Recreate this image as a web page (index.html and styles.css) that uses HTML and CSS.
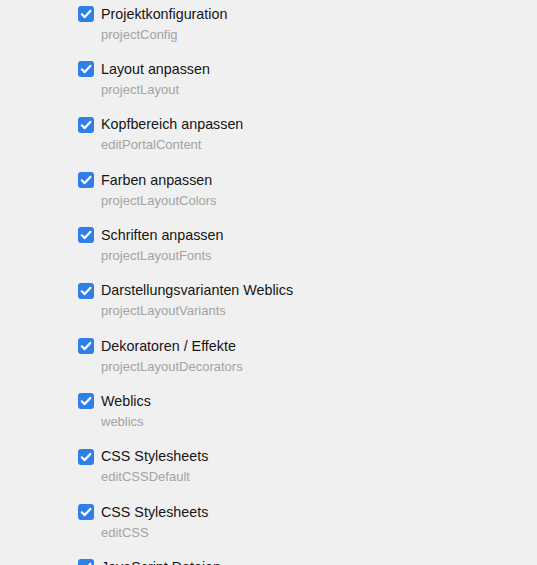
FILE: index.html
```html
<!DOCTYPE html>
<html lang="de">
<head>
<meta charset="utf-8">
<title>Rechte</title>
<link rel="stylesheet" href="styles.css">
</head>
<body>
<ul class="perm-list">
  <li class="perm"><span class="check"><svg viewBox="0 0 16 16"><path d="M3.8 8.3 L6.7 11.1 L12.3 4.9"/></svg></span><div class="text"><div class="label">Projektkonfiguration</div><div class="key">projectConfig</div></div></li>
  <li class="perm"><span class="check"><svg viewBox="0 0 16 16"><path d="M3.8 8.3 L6.7 11.1 L12.3 4.9"/></svg></span><div class="text"><div class="label">Layout anpassen</div><div class="key">projectLayout</div></div></li>
  <li class="perm"><span class="check"><svg viewBox="0 0 16 16"><path d="M3.8 8.3 L6.7 11.1 L12.3 4.9"/></svg></span><div class="text"><div class="label">Kopfbereich anpassen</div><div class="key">editPortalContent</div></div></li>
  <li class="perm"><span class="check"><svg viewBox="0 0 16 16"><path d="M3.8 8.3 L6.7 11.1 L12.3 4.9"/></svg></span><div class="text"><div class="label">Farben anpassen</div><div class="key">projectLayoutColors</div></div></li>
  <li class="perm"><span class="check"><svg viewBox="0 0 16 16"><path d="M3.8 8.3 L6.7 11.1 L12.3 4.9"/></svg></span><div class="text"><div class="label">Schriften anpassen</div><div class="key">projectLayoutFonts</div></div></li>
  <li class="perm"><span class="check"><svg viewBox="0 0 16 16"><path d="M3.8 8.3 L6.7 11.1 L12.3 4.9"/></svg></span><div class="text"><div class="label">Darstellungsvarianten Weblics</div><div class="key">projectLayoutVariants</div></div></li>
  <li class="perm"><span class="check"><svg viewBox="0 0 16 16"><path d="M3.8 8.3 L6.7 11.1 L12.3 4.9"/></svg></span><div class="text"><div class="label">Dekoratoren / Effekte</div><div class="key">projectLayoutDecorators</div></div></li>
  <li class="perm"><span class="check"><svg viewBox="0 0 16 16"><path d="M3.8 8.3 L6.7 11.1 L12.3 4.9"/></svg></span><div class="text"><div class="label">Weblics</div><div class="key">weblics</div></div></li>
  <li class="perm"><span class="check"><svg viewBox="0 0 16 16"><path d="M3.8 8.3 L6.7 11.1 L12.3 4.9"/></svg></span><div class="text"><div class="label">CSS Stylesheets</div><div class="key">editCSSDefault</div></div></li>
  <li class="perm"><span class="check"><svg viewBox="0 0 16 16"><path d="M3.8 8.3 L6.7 11.1 L12.3 4.9"/></svg></span><div class="text"><div class="label">CSS Stylesheets</div><div class="key">editCSS</div></div></li>
  <li class="perm"><span class="check"><svg viewBox="0 0 16 16"><path d="M3.8 8.3 L6.7 11.1 L12.3 4.9"/></svg></span><div class="text"><div class="label">JavaScript Dateien</div><div class="key">editJavaScript</div></div></li>
</ul>
</body>
</html>
```

FILE: styles.css
```css
html, body {
  margin: 0;
  padding: 0;
  background: #f0f0f0;
  height: 100%;
  overflow: hidden;
}
body {
  font-family: "Liberation Sans", Arial, sans-serif;
}
.perm-list {
  list-style: none;
  margin: 0;
  padding: 3.5px 0 0 78px;
}
.perm {
  display: flex;
  align-items: flex-start;
  gap: 7px;
  height: 55.35px;
}
.check {
  flex: none;
  width: 16px;
  height: 16px;
  margin-top: 2.5px;
  border-radius: 3px;
  background: #2f7fe8;
  display: flex;
}
.check svg {
  width: 16px;
  height: 16px;
  fill: none;
  stroke: #fff;
  stroke-width: 2.2;
  stroke-linecap: round;
  stroke-linejoin: round;
}
.label {
  font-size: 14.3px;
  line-height: 20px;
  color: #151515;
}
.key {
  font-size: 13px;
  line-height: 20px;
  margin-top: 1px;
  color: #a3a3a3;
}
```
